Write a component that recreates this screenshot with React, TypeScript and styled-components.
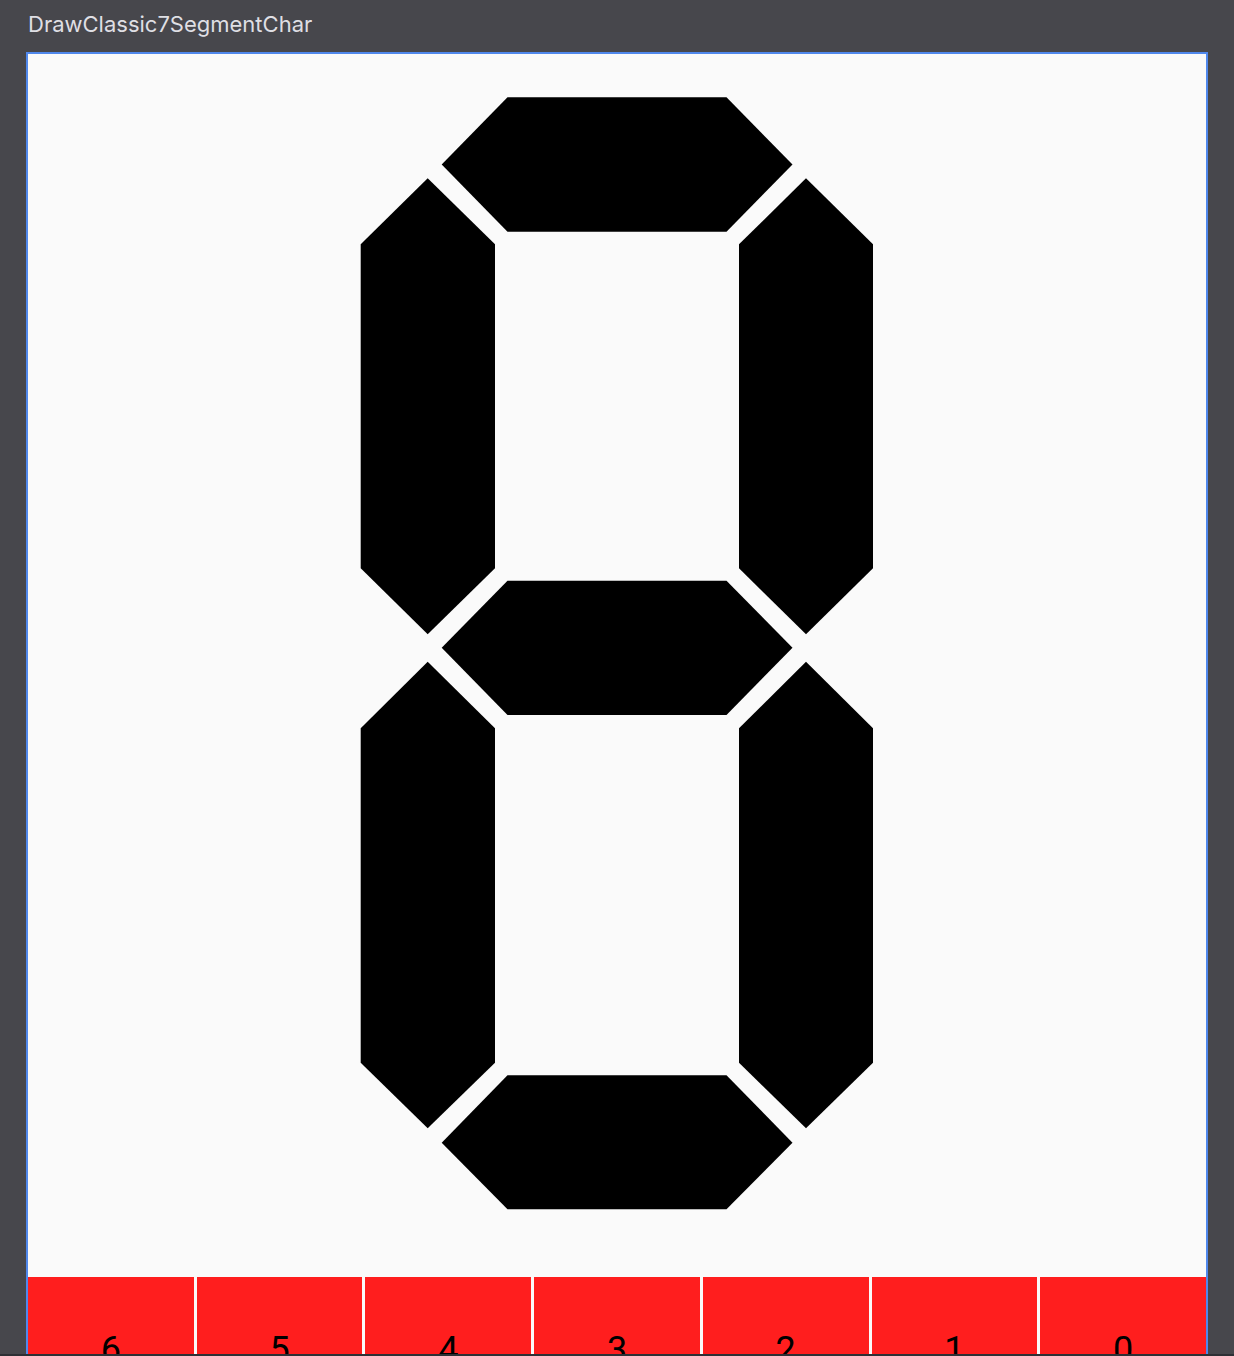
import React, { useState } from "react";
import styled, { createGlobalStyle } from "styled-components";

const GlobalStyle = createGlobalStyle`
  html, body {
    margin: 0;
    padding: 0;
    background: #47474c;
  }
  #root {
    height: 1356px;
  }
`;

type Seg = { id: number; points: string };

// segment polygons, coordinates inside the drawing area
const SEGMENTS: Seg[] = [
  { id: 0, points: "413.7,110.5 479.5,43.3 698.5,43.3 764.5,110.5 698.5,177.7 479.5,177.7" },
  { id: 1, points: "778,124.3 845,190.3 845,514.3 778,580.3 711,514.3 711,190.3" },
  { id: 2, points: "778,607.7 845,674.3 845,1008.7 778,1074.3 711,1008.7 711,674.3" },
  { id: 3, points: "413.7,1088.7 479.5,1021.3 698.5,1021.3 764.5,1088.7 698.5,1155.3 479.5,1155.3" },
  { id: 4, points: "399.7,607.7 467,674.3 467,1008.7 399.7,1074.3 332.7,1008.7 332.7,674.3" },
  { id: 5, points: "399.7,124.3 467,190.3 467,514.3 399.7,580.3 332.7,514.3 332.7,190.3" },
  { id: 6, points: "413.7,593.8 479.5,526.7 698.5,526.7 764.5,593.8 698.5,661 479.5,661" },
];

const BITS = [6, 5, 4, 3, 2, 1, 0];

const App: React.FC = () => {
  const [mask, setMask] = useState(0x7f);

  const toggle = (bit: number) => setMask((m) => m ^ (1 << bit));

  return (
    <>
      <GlobalStyle />
      <Page>
        <Title>DrawClassic7SegmentChar</Title>
        <Panel>
          <Canvas viewBox="0 0 1178 1223" width="1178" height="1223">
            {SEGMENTS.map((s) => (
              <polygon key={s.id} points={s.points} fill={mask & (1 << s.id) ? "#000" : "#e6e6e6"} />
            ))}
          </Canvas>
          <BitRow>
            {BITS.map((b) => (
              <BitButton key={b} on={!!(mask & (1 << b))} onClick={() => toggle(b)}>
                {b}
              </BitButton>
            ))}
          </BitRow>
        </Panel>
        <BottomEdge />
      </Page>
    </>
  );
};

export default App;

const Page = styled.div`
  height: 1356px;
  display: flex;
  flex-direction: column;
  overflow: hidden;
  padding: 0 26px;
  box-sizing: border-box;
  position: relative;
`;

const Title = styled.div`
  height: 52px;
  flex-shrink: 0;
  padding-left: 2px;
  font-family: Inter, "Noto Sans", sans-serif;
  font-size: 22px;
  line-height: 48px;
  color: #dfdfe4;
`;

const Panel = styled.div`
  flex: 1;
  min-height: 0;
  overflow: hidden;
  display: flex;
  flex-direction: column;
  border: 2px solid #5088ec;
  border-bottom: none;
  background: #fafafa;
`;

const Canvas = styled.svg`
  display: block;
  flex-shrink: 0;
  width: 1178px;
  height: 1223px;
`;

const BitRow = styled.div`
  display: grid;
  grid-template-columns: repeat(7, 1fr);
  gap: 3px;
  background: #fafafa;
  flex-shrink: 0;
`;

const BitButton = styled.button<{ on: boolean }>`
  height: 120px;
  border: none;
  margin: 0;
  padding: 0;
  padding-top: 55px;
  background: ${(p) => (p.on ? "#ff1e1e" : "#f1b8b8")};
  color: #000;
  font-family: Roboto, "Noto Sans", sans-serif;
  font-size: 36px;
  line-height: 36px;
  text-align: center;
  align-self: start;
  display: flex;
  justify-content: center;
  align-items: flex-start;
  cursor: pointer;
`;

const BottomEdge = styled.div`
  position: absolute;
  left: 0;
  right: 0;
  bottom: 0;
  height: 2px;
  background: #2e3035;
`;
